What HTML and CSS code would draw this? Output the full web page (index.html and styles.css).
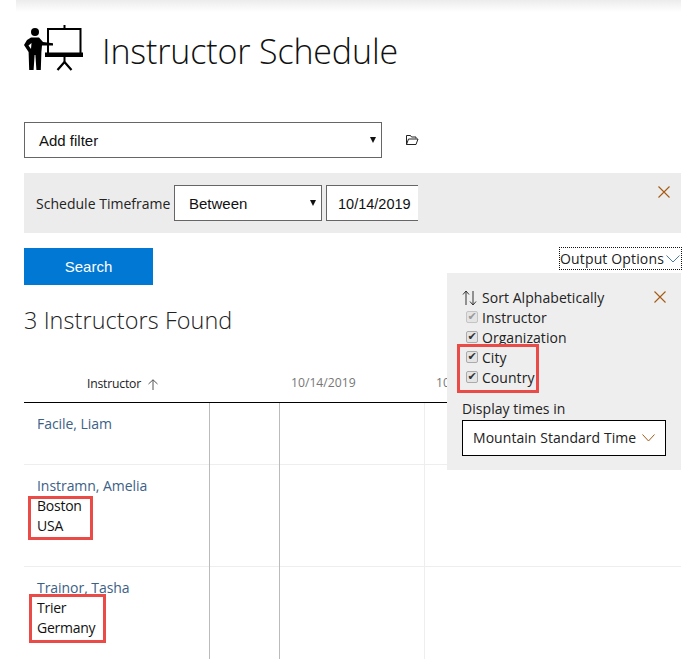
FILE: index.html
```html
<!DOCTYPE html>
<html lang="en">
<head>
    <meta charset="UTF-8">
    <meta name="viewport" content="width=device-width, initial-scale=1.0">
    <title>Instructor Schedule</title>
    <link rel="stylesheet" href="styles.css">
</head>
<body>
    <div class="top-shadow"></div>
    <div class="container">
        <header class="page-head">
            <svg class="logo" width="60" height="46" viewBox="0 0 60 46" aria-hidden="true">
                <circle cx="11" cy="7" r="4" fill="#000"/>
                <path d="M7 12.5 H15 L19 17 L29 18.2 V20.4 L18 20.6 L17.4 27 L16.8 45 H12.4 L11.4 30 H10.6 L9.6 45 H5.2 L4.6 27 L0 20 L3 15 Z" fill="#000"/>
                <path d="M7.5 18 L4.5 20.5 L7 24 Z" fill="#fff"/>
                <path d="M24 4 H56.5 V29 H24 Z" fill="none" stroke="#000" stroke-width="2"/>
                <path d="M39.5 0 H41.5 V4 H39.5 Z M21 27.5 H59 V32 H21 Z M26 28.4 H54 V29.4 H26 Z M39.5 32 H41.5 V38 H39.5 Z" fill="#000"/>
                <path d="M40.5 37 L33.5 45 M40.5 37 L47.5 45" fill="none" stroke="#000" stroke-width="2.2"/>
            </svg>
            <h1>Instructor Schedule</h1>
        </header>

        <div class="filter-row">
            <div class="select filter-select">Add filter<span class="caret"></span></div>
            <svg class="folder" width="14" height="12" viewBox="0 0 14 12" aria-hidden="true">
                <path d="M1.5 10.5 V1.5 H5.5 L6.5 3 H11 V4.5 M1.5 10.5 L3.5 5 H13 L11 10.5 Z" fill="none" stroke="#222" stroke-width="1"/>
            </svg>
        </div>

        <div class="timeframe">
            <span class="timeframe-label">Schedule Timeframe</span>
            <div class="select between-select">Between<span class="caret"></span></div>
            <div class="date-input">10/14/2019</div>
            <svg class="close timeframe-close" width="12" height="12" viewBox="0 0 12 12" aria-hidden="true">
                <path d="M0.5 0.5 L11.5 11.5 M11.5 0.5 L0.5 11.5" stroke="#a65a14" stroke-width="1.1"/>
            </svg>
        </div>

        <div class="action-row">
            <button class="search-btn">Search</button>
            <div class="output-toggle">Output Options
                <svg width="14" height="8" viewBox="0 0 14 8" aria-hidden="true"><path d="M0.5 0.5 L7 7 L13.5 0.5" fill="none" stroke="#4a7ba8" stroke-width="1"/></svg>
            </div>
        </div>

        <h2>3 Instructors Found</h2>

        <div class="grid-head">
            <div class="col-name">Instructor
                <svg width="10" height="11" viewBox="0 0 10 11" aria-hidden="true"><path d="M5 11 V0.8 M0.5 5 L5 0.8 L9.5 5" fill="none" stroke="#555" stroke-width="1"/></svg>
            </div>
            <div class="col-gap"></div>
            <div class="col-date">10/14/2019</div>
            <div class="col-date">10</div>
        </div>

        <div class="grid-row row-short">
            <div class="col-name"><a class="name">Facile, Liam</a></div>
            <div class="col-gap"></div>
            <div class="col-date"></div>
            <div class="col-date"></div>
        </div>
        <div class="grid-row row-tall">
            <div class="col-name"><a class="name">Instramn, Amelia</a><div>Boston</div><div>USA</div></div>
            <div class="col-gap"></div>
            <div class="col-date"></div>
            <div class="col-date"></div>
        </div>
        <div class="grid-row row-tall">
            <div class="col-name"><a class="name">Trainor, Tasha</a><div>Trier</div><div>Germany</div></div>
            <div class="col-gap"></div>
            <div class="col-date"></div>
            <div class="col-date"></div>
        </div>
    </div>

    <!-- dropdown lies over the grid -->
    <div class="options-panel">
        <div class="sort-title">
            <svg width="15" height="16" viewBox="0 0 15 16" aria-hidden="true"><path d="M4 15 V1 M1 4.5 L4 1 L7 4.5 M11 1 V15 M8 11.5 L11 15 L14 11.5" fill="none" stroke="#333" stroke-width="1"/></svg>
            Sort Alphabetically
            <svg class="close options-close" width="12" height="12" viewBox="0 0 12 12" aria-hidden="true">
                <path d="M0.5 0.5 L11.5 11.5 M11.5 0.5 L0.5 11.5" stroke="#a65a14" stroke-width="1.1"/>
            </svg>
        </div>
        <label class="check"><input type="checkbox" checked disabled>Instructor</label>
        <label class="check"><input type="checkbox" checked>Organization</label>
        <label class="check"><input type="checkbox" checked>City</label>
        <label class="check"><input type="checkbox" checked>Country</label>
        <div class="times-label">Display times in</div>
        <div class="times-select">Mountain Standard Time
            <svg width="13" height="8" viewBox="0 0 13 8" aria-hidden="true"><path d="M0.5 0.5 L6.5 7 L12.5 0.5" fill="none" stroke="#a65a14" stroke-width="1"/></svg>
        </div>
    </div>

    <!-- red annotation boxes from the screenshot -->
    <div class="mark mark-options"></div>
    <div class="mark mark-boston"></div>
    <div class="mark mark-trier"></div>
</body>
</html>
```

FILE: styles.css
```css
html, body {
    height: 659px;
    overflow: hidden;
}
body {
    font-family: "Open Sans", "Noto Sans", sans-serif;
    font-size: 14px;
    background-color: #fff;
    color: #222;
    margin: 0;
    position: relative;
}
.top-shadow {
    height: 12px;
    background: linear-gradient(#ececec, #fff);
    margin: 0 16px;
}
.container {
    margin-left: 24px;
    width: 657px;
}
.page-head {
    display: flex;
    align-items: center;
    height: 60px;
    margin-top: 9px;
}
.logo {
    margin: -6px 18px 0 0;
}
h1 {
    font-size: 34px;
    font-weight: 300;
    margin: 0;
    color: #111;
    letter-spacing: -0.15px;
}
.filter-row {
    display: flex;
    align-items: center;
    margin-top: 41px;
}
.select {
    position: relative;
    box-sizing: border-box;
    height: 36px;
    line-height: 36px;
    border: 1px solid #666;
    background-color: #fff;
    font-family: "Liberation Sans", sans-serif;
    font-size: 15px;
    color: #111;
}
.filter-select {
    width: 358px;
    padding-left: 14px;
}
.caret {
    position: absolute;
    right: 5px;
    top: 14px;
    border-left: 3px solid transparent;
    border-right: 3px solid transparent;
    border-top: 6px solid #111;
}
.folder {
    margin-left: 23px;
}
.timeframe {
    position: relative;
    display: flex;
    align-items: center;
    height: 60px;
    margin-top: 15px;
    padding-left: 12px;
    background-color: #ececec;
}
.timeframe-label {
    width: 138px;
    font-size: 14px;
    letter-spacing: 0.02px;
    white-space: nowrap;
}
.between-select {
    width: 148px;
    padding-left: 14px;
}
.date-input {
    box-sizing: border-box;
    width: 92px;
    height: 36px;
    margin-left: 4px;
    padding-left: 11px;
    line-height: 36px;
    border: 1px solid #666;
    border-right: 0;
    background-color: #fff;
    font-family: "Liberation Sans", sans-serif;
    font-size: 14.5px;
    color: #111;
}
.timeframe-close {
    position: absolute;
    right: 11px;
    top: 13px;
}
.action-row {
    display: flex;
    justify-content: space-between;
    align-items: flex-start;
    margin-top: 15px;
    height: 37px;
}
.search-btn {
    width: 129px;
    height: 37px;
    border: 0;
    background-color: #0078d4;
    color: #fff;
    font-family: "Liberation Sans", sans-serif;
    font-size: 15px;
}
.output-toggle {
    display: flex;
    align-items: center;
    justify-content: space-between;
    box-sizing: border-box;
    height: 23px;
    width: 123px;
    padding-right: 1px;
    margin-right: -1px;
    margin-top: -1px;
    border: 1px dotted #111;
    font-size: 14px;
    letter-spacing: 0.15px;
    white-space: nowrap;
}
h2 {
    font-size: 23.4px;
    font-weight: 300;
    margin: 17px 0 0;
    line-height: 36px;
    color: #222;
    letter-spacing: 0.1px;
}
.grid-head, .grid-row {
    display: grid;
    grid-template-columns: 186px 70px 145px 1fr;
}
.grid-head {
    margin-top: 28px;
    height: 36px;
    border-bottom: 1px solid #000;
    font-size: 12.2px;
    line-height: 34px;
}
.grid-head .col-name {
    padding-left: 63px;
    letter-spacing: -0.2px;
    display: flex;
    align-items: center;
    gap: 7px;
}
.grid-head .col-date {
    padding-left: 11px;
    color: #777;
}
.grid-row {
    border-bottom: 1px solid #eee;
    font-size: 14px;
    letter-spacing: -0.25px;
    line-height: 20px;
    color: #111;
}
.row-short {
    height: 61px;
}
.row-tall {
    height: 101px;
}
.grid-row .col-name {
    padding: 11px 0 0 13px;
    border-right: 1px solid #bbb;
    margin-bottom: -1px;
}
.grid-row .col-gap {
    border-right: 1px solid #bbb;
    margin-bottom: -1px;
}
.grid-row .col-date:nth-child(3) {
    border-right: 1px solid #eee;
    margin-bottom: -1px;
}
.name {
    color: #3b6186;
    letter-spacing: -0.05px;
}
.options-panel {
    position: absolute;
    left: 447px;
    top: 273px;
    box-sizing: border-box;
    width: 234px;
    height: 197px;
    padding: 15px 15px 0;
    background-color: #eee;
    font-size: 14px;
    letter-spacing: 0.05px;
    line-height: 20px;
}
.sort-title {
    position: relative;
    display: flex;
    align-items: center;
    gap: 5px;
}
.options-close {
    position: absolute;
    right: 0;
    top: 3px;
}
.check {
    display: flex;
    align-items: center;
    height: 20px;
}
.check input {
    appearance: none;
    box-sizing: border-box;
    display: flex;
    align-items: center;
    justify-content: center;
    width: 12px;
    height: 12px;
    margin: 0 4px 2px 4px;
    border: 1px solid #aaa;
    border-radius: 2px;
    background-color: #e4e4e4;
}
.check input::before {
    content: "\2714";
    font-family: "DejaVu Sans", sans-serif;
    font-size: 11px;
    line-height: 10px;
    color: #333;
}
.check input:disabled {
    border-color: #c4c4c4;
}
.check input:disabled::before {
    color: #9a9a9a;
}
.times-label {
    margin-top: 11px;
}
.times-select {
    display: flex;
    align-items: center;
    justify-content: space-between;
    box-sizing: border-box;
    width: 204px;
    height: 36px;
    margin-top: 1px;
    padding: 0 10px;
    border: 1px solid #000;
    background-color: #fff;
}
.mark {
    position: absolute;
    box-sizing: border-box;
    border: 3px solid #ea4b47;
}
.mark-options {
    left: 457px;
    top: 344px;
    width: 82px;
    height: 49px;
}
.mark-boston {
    left: 28px;
    top: 496px;
    width: 65px;
    height: 44px;
}
.mark-trier {
    left: 29px;
    top: 594px;
    width: 77px;
    height: 49px;
}
```
